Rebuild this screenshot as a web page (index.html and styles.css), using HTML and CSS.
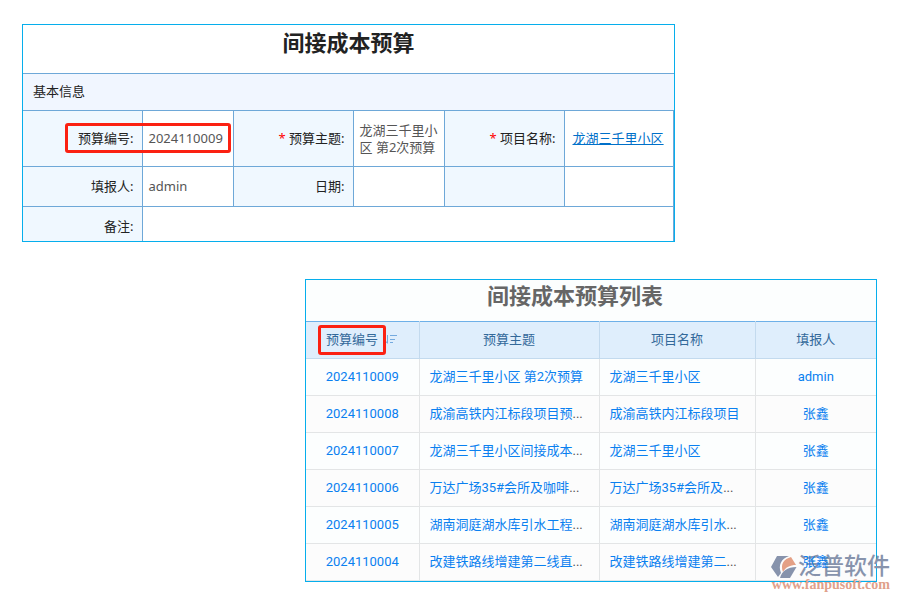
FILE: index.html
```html
<!DOCTYPE html>
<html lang="zh-CN">
  <head>
    <meta charset="UTF-8" />
    <meta name="viewport" content="width=device-width, initial-scale=1.0" />
    <title>间接成本预算</title>
    <link rel="stylesheet" href="styles.css">
  </head>
  <body>
    <main class="page">
      <section class="form-card">
        <h1 class="form-title">间接成本预算</h1>
        <h2 class="form-section">基本信息</h2>
        <table class="form-table">
          <colgroup>
            <col class="c-first"><col class="c-value">
            <col class="c-label"><col class="c-value">
            <col class="c-label"><col class="c-last">
          </colgroup>
          <tr class="row-tall">
            <th scope="row"><span class="mark">预算编号:</span></th>
            <td>2024110009</td>
            <th scope="row"><span class="required">*</span> 预算主题:</th>
            <td>龙湖三千里小区 第2次预算</td>
            <th scope="row"><span class="required">*</span> 项目名称:</th>
            <td class="link-cell"><a href="#">龙湖三千里小区</a></td>
          </tr>
          <tr class="row-mid">
            <th scope="row">填报人:</th>
            <td>admin</td>
            <th scope="row">日期:</th>
            <td></td>
            <th></th>
            <td></td>
          </tr>
          <tr class="row-note">
            <th scope="row">备注:</th>
            <td colspan="5"></td>
          </tr>
        </table>
      </section>

      <section class="list-card">
        <h2 class="list-title">间接成本预算列表</h2>
        <table class="list-table">
          <colgroup>
            <col class="l-code"><col class="l-subject"><col class="l-project"><col class="l-user">
          </colgroup>
          <thead>
            <tr>
              <th scope="col">
                <span class="sort-head">
                  <span class="mark-head">预算编号</span>
                  <svg class="sort-icon" width="12" height="12" viewBox="0 0 12 12">
                    <path d="M2.5 1v8M0.5 7l2 2.5" fill="none" stroke="#74aadf" />
                    <path d="M5 1.500h7M5 5.500h5M5 8.500h3" fill="none" stroke="#74aadf" />
                  </svg>
                </span>
              </th>
              <th scope="col">预算主题</th>
              <th scope="col">项目名称</th>
              <th scope="col">填报人</th>
            </tr>
          </thead>
          <tbody>
            <tr>
              <td><a href="#">2024110009</a></td>
              <td><a href="#">龙湖三千里小区 第2次预算</a></td>
              <td><a href="#">龙湖三千里小区</a></td>
              <td><a href="#">admin</a></td>
            </tr>
            <tr>
              <td><a href="#">2024110008</a></td>
              <td><a href="#">成渝高铁内江标段项目预</a>...</td>
              <td><a href="#">成渝高铁内江标段项目</a></td>
              <td><a href="#">张鑫</a></td>
            </tr>
            <tr>
              <td><a href="#">2024110007</a></td>
              <td><a href="#">龙湖三千里小区间接成本</a>...</td>
              <td><a href="#">龙湖三千里小区</a></td>
              <td><a href="#">张鑫</a></td>
            </tr>
            <tr>
              <td><a href="#">2024110006</a></td>
              <td><a href="#">万达广场35#会所及咖啡</a>...</td>
              <td><a href="#">万达广场35#会所及</a>...</td>
              <td><a href="#">张鑫</a></td>
            </tr>
            <tr>
              <td><a href="#">2024110005</a></td>
              <td><a href="#">湖南洞庭湖水库引水工程</a>...</td>
              <td><a href="#">湖南洞庭湖水库引水</a>...</td>
              <td><a href="#">张鑫</a></td>
            </tr>
            <tr>
              <td><a href="#">2024110004</a></td>
              <td><a href="#">改建铁路线增建第二线直</a>...</td>
              <td><a href="#">改建铁路线增建第二</a>...</td>
              <td><a href="#">张鑫</a></td>
            </tr>
          </tbody>
        </table>
        <div class="watermark">
          <div class="brand">
            <svg width="27" height="24" viewBox="0 0 27 24">
              <path d="M6 1h12C10 4 7 10 10 18L7 22 0 12z" fill="#8793ac" />
              <path d="M12 17C9 9 13 4 20 2l5 8c-6 0-10 2-13 7z" fill="#e4a085" />
              <path d="M9 23c2-7 7-11 16.500-11L19 23z" fill="#8793ac" />
            </svg>
            <span>泛普软件</span>
          </div>
          <div class="site">www.fanpusoft.com</div>
        </div>
      </section>
    </main>
  </body>
</html>
```
FILE: styles.css
```css
* {
  box-sizing: border-box;
}
body {
  margin: 0;
  background: #fff;
  font-family: "Noto Sans", "Noto Sans CJK SC", sans-serif;
  font-size: 13px;
  line-height: 17px;
}
.page {
  padding: 24px 23px 18px 22px;
}
h1,
h2 {
  margin: 0;
}
table {
  width: 100%;
  border-collapse: collapse;
  table-layout: fixed;
}
th {
  font-weight: normal;
}

/* form */
.form-card {
  margin-right: 202px;
  border: 1px solid #06aeec;
  color: #222;
}
.form-title {
  height: 48px;
  font-size: 22px;
  line-height: 34px;
  text-align: center;
}
.form-section {
  padding: 8px 10px 10px;
  border-top: 1px solid #6ea8d8;
  background: #f1f6ff;
  font-size: 13px;
  font-weight: normal;
  line-height: 18px;
}
.c-first {
  width: 119px;
}
.c-label {
  width: 120px;
}
.c-value {
  width: 91px;
}
.form-table th,
.form-table td {
  border: 1px solid #6ea8d8;
  padding: 0 6px;
}
.form-table th {
  padding-right: 8px;
  background: #f0f8ff;
  text-align: right;
}
.form-table th:first-child {
  border-left: none;
}
.form-table tr:last-child > * {
  border-bottom: none;
}
.form-table td {
  color: #555;
}
.form-table .link-cell {
  padding-left: 8px;
}
.link-cell a {
  color: #0070c9;
}
.required {
  color: #f00;
}
.row-tall {
  height: 56px;
}
.row-mid {
  height: 40px;
}
.row-note {
  height: 34px;
}
.row-note th {
  padding-top: 6px;
}

/* red frame around the code field */
.mark,
.mark-head {
  position: relative;
}
.mark::after,
.mark-head::after {
  content: "";
  position: absolute;
  box-sizing: border-box;
  border: 3px solid #fb2112;
  border-radius: 3px;
}
.mark::after {
  top: -6px;
  left: -13px;
  width: 166px;
  height: 30px;
}
.mark-head::after {
  inset: -6px -8px -7px;
}

/* list */
.list-card {
  position: relative;
  margin: 37px 0 0 283px;
  border: 1px solid #06aeec;
  background: #fcfefe;
  font-family: Roboto, "Noto Sans CJK SC", sans-serif;
}
.list-title {
  height: 41px;
  color: #666;
  font-size: 22px;
  line-height: 34px;
  text-align: center;
  padding-right: 32px;
}
.l-code {
  width: 113px;
}
.l-subject {
  width: 180px;
}
.l-project {
  width: 156px;
}
.list-table th,
.list-table td {
  height: 37px;
  padding: 0 10px;
  border: 1px solid #e3e5e6;
  white-space: nowrap;
}
.list-table th {
  border-color: #c3daee;
  border-top-color: #6eb0e8;
  background: #dfeefc;
  color: #33699a;
}
.list-table tr > :first-child {
  border-left: none;
  text-align: center;
}
.list-table tr > :last-child {
  border-right: none;
  text-align: center;
}
.list-table tbody tr:nth-child(even) {
  background: #fcfcfc;
}
.list-table td {
  color: #555;
}
.list-table a {
  position: relative;
  z-index: 1;
  color: #0a80f0;
  text-decoration: none;
}
.sort-head {
  display: flex;
  align-items: center;
  gap: 7px;
  padding-left: 10px;
}

.watermark {
  position: absolute;
  right: -14px;
  bottom: -9px;
  pointer-events: none;
}
.brand {
  display: flex;
  align-items: center;
  justify-content: flex-end;
  color: #8793ac;
  font-size: 23px;
  font-weight: 500;
  line-height: 26px;
}
.site {
  color: #e0a08a;
  font: bold 14px/10px "Liberation Serif", serif;
  text-align: right;
}
```
